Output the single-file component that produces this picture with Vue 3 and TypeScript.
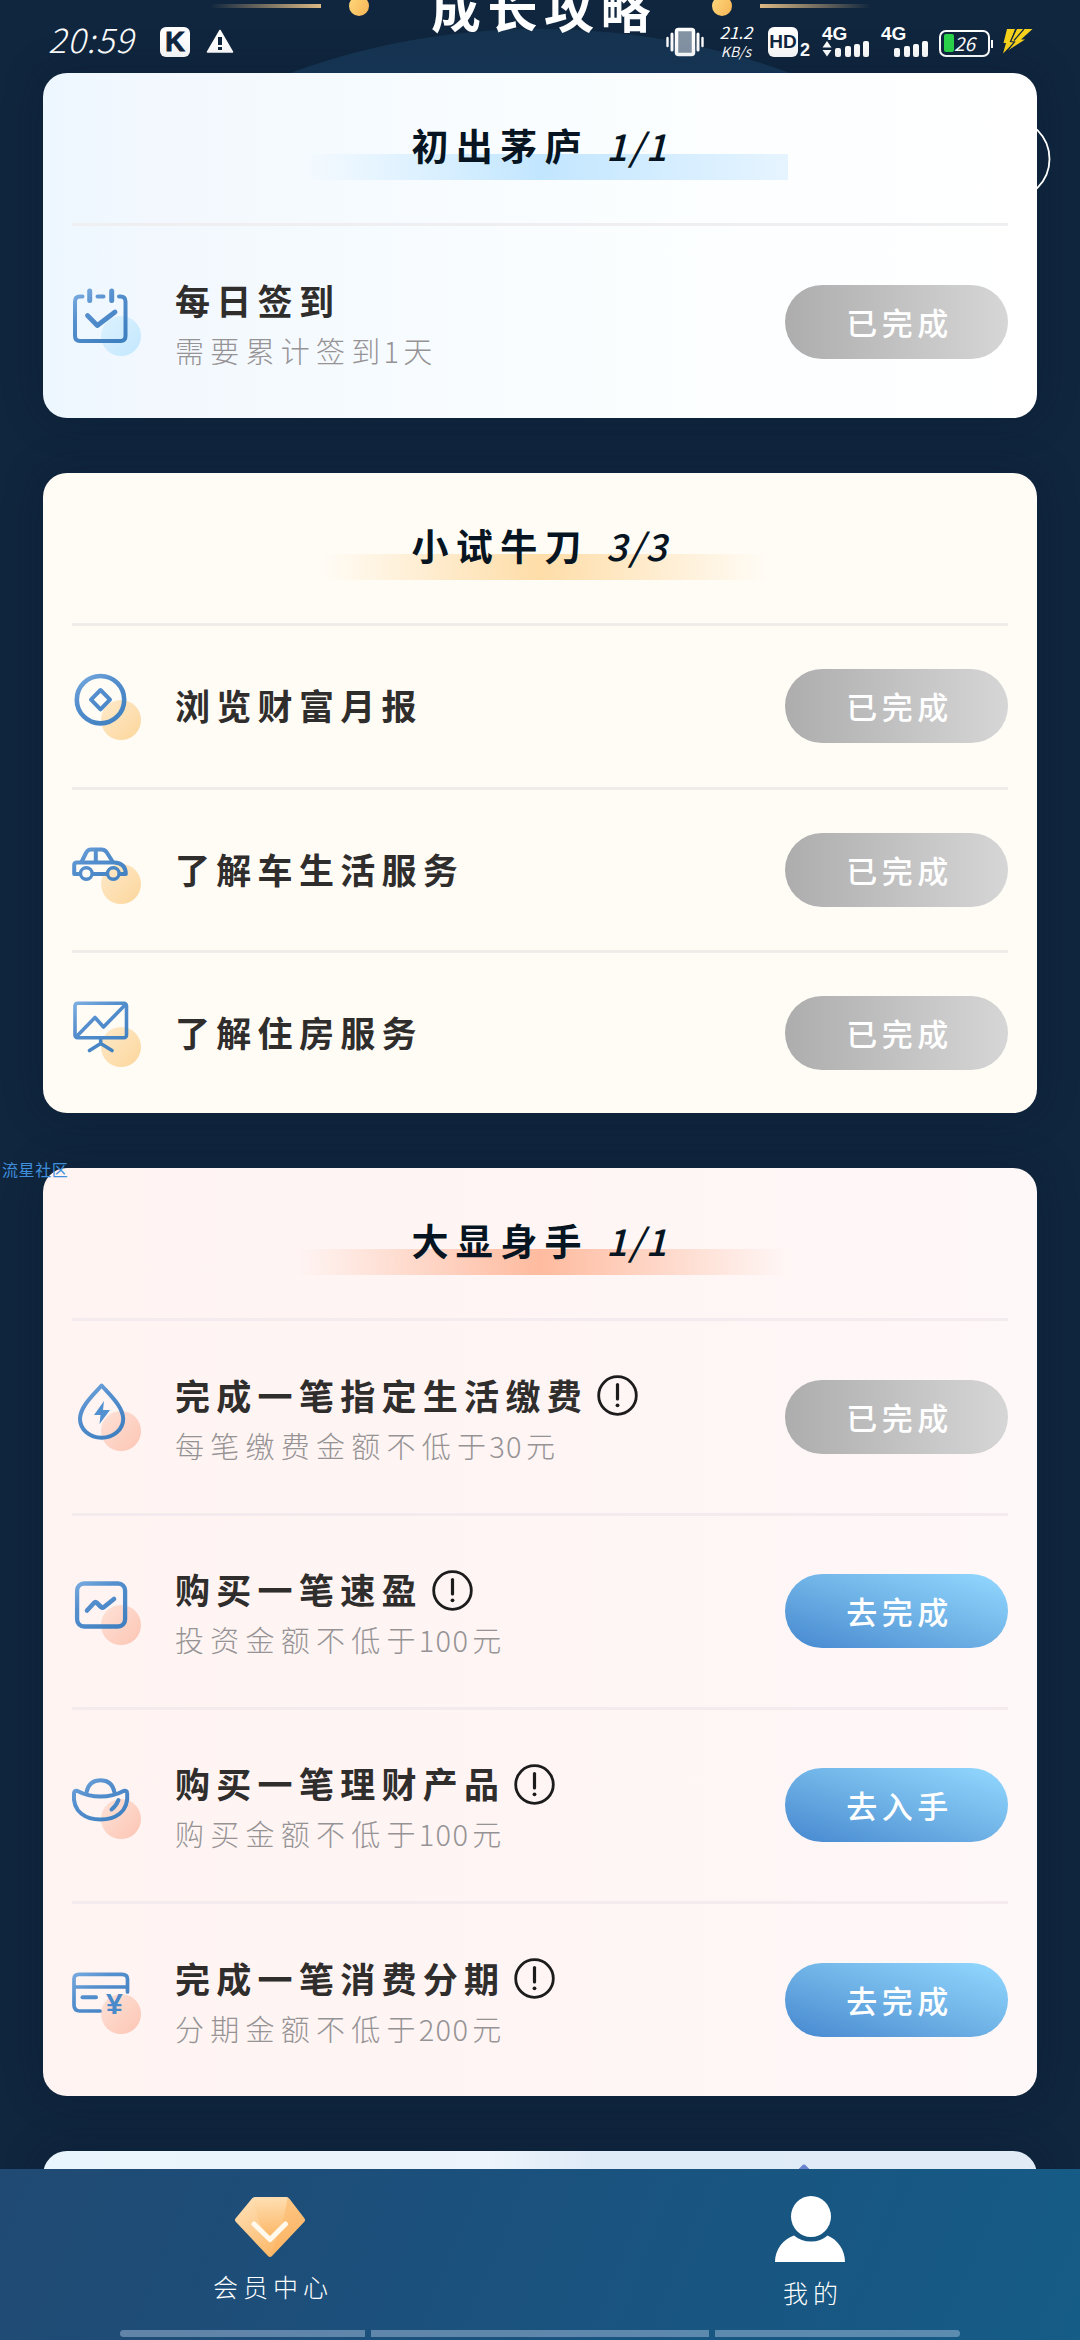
<script setup lang="ts">
type Tone = 'blue' | 'gold' | 'coral'
type IconName = 'calendar' | 'coin' | 'car' | 'board' | 'drop' | 'trend' | 'ingot' | 'bill'

interface Task {
  icon: IconName
  label: string
  desc?: string
  info?: boolean
  action: string
  done: boolean
}

interface Group {
  title: string
  count: string
  tone: Tone
  tasks: Task[]
}

const groups: Group[] = [
  {
    title: '初出茅庐',
    count: '1/1',
    tone: 'blue',
    tasks: [{ icon: 'calendar', label: '每日签到', desc: '需要累计签到1天', action: '已完成', done: true }],
  },
  {
    title: '小试牛刀',
    count: '3/3',
    tone: 'gold',
    tasks: [
      { icon: 'coin', label: '浏览财富月报', action: '已完成', done: true },
      { icon: 'car', label: '了解车生活服务', action: '已完成', done: true },
      { icon: 'board', label: '了解住房服务', action: '已完成', done: true },
    ],
  },
  {
    title: '大显身手',
    count: '1/1',
    tone: 'coral',
    tasks: [
      { icon: 'drop', label: '完成一笔指定生活缴费', desc: '每笔缴费金额不低于30元', info: true, action: '已完成', done: true },
      { icon: 'trend', label: '购买一笔速盈', desc: '投资金额不低于100元', info: true, action: '去完成', done: false },
      { icon: 'ingot', label: '购买一笔理财产品', desc: '购买金额不低于100元', info: true, action: '去入手', done: false },
      { icon: 'bill', label: '完成一笔消费分期', desc: '分期金额不低于200元', info: true, action: '去完成', done: false },
    ],
  },
]

// Digits are set tighter than the Chinese characters around them.
const runs = (text: string): string[] => text.split(/(\d+)/).filter(Boolean)
const isDigits = (text: string): boolean => /^\d+$/.test(text)

const signalBars: number[] = [9, 11, 13, 16]
</script>

<template>
  <div class="screen">
    <svg class="defs" width="0" height="0" aria-hidden="true">
      <defs>
        <linearGradient id="stroke-blue" gradientUnits="userSpaceOnUse" x1="2" y1="2" x2="40" y2="58">
          <stop offset="0" stop-color="#7fb0e2" />
          <stop offset="0.4" stop-color="#558fce" />
          <stop offset="1" stop-color="#3f80c0" />
        </linearGradient>
        <linearGradient id="dot-blue" x1="0" y1="0" x2="1" y2="1">
          <stop offset="0" stop-color="#ddf1fe" />
          <stop offset="1" stop-color="#c3e8fe" />
        </linearGradient>
        <linearGradient id="dot-gold" x1="0" y1="0" x2="1" y2="1">
          <stop offset="0" stop-color="#feeacb" />
          <stop offset="1" stop-color="#fcd69b" />
        </linearGradient>
        <linearGradient id="dot-coral" x1="0" y1="0" x2="1" y2="1">
          <stop offset="0" stop-color="#fee2d8" />
          <stop offset="1" stop-color="#fcc5b3" />
        </linearGradient>
      </defs>
    </svg>

    <header class="hero">
      <div class="hill"></div>
      <div class="hero-line">
        <i class="ray left"></i>
        <i class="bead"></i>
        <h1>成长攻略</h1>
        <i class="bead"></i>
        <i class="ray right"></i>
      </div>
    </header>

    <div class="status">
      <div class="status-side">
        <span class="clock">20:59</span>
        <span class="badge k">K</span>
        <svg class="warn" width="28" height="24" viewBox="0 0 28 24">
          <path d="M14 1.5 26.5 23H1.5Z" fill="#fff" stroke="#fff" stroke-width="1.5" stroke-linejoin="round" />
          <path d="M14 8v8M14 18v3" stroke="#10263e" stroke-width="4" />
        </svg>
      </div>
      <div class="status-side">
        <svg class="vib" width="38" height="30" viewBox="0 0 38 30">
          <rect x="10.5" y="2.500" width="17" height="25" rx="2" fill="#8494a5" stroke="#fff" stroke-width="3.500" />
          <path d="M6 7v16M32 7v16" stroke="#fff" stroke-width="3" stroke-linecap="round" />
          <path d="M1.500 11v8M36.500 11v8" stroke="#fff" stroke-width="2.400" stroke-linecap="round" />
        </svg>
        <span class="speed"><b>21.2</b><b>KB/s</b></span>
        <span class="badge hd">HD</span>
        <span class="slot">2</span>
        <div v-for="n in 2" :key="n" class="signal" :class="{ second: n === 2 }">
          <span class="net">4G</span>
          <div class="signal-row">
            <svg width="10" height="16" viewBox="0 0 10 16" :class="{ blank: n === 2 }">
              <path d="M5 0 9.500 6.500H.5ZM5 15.500 .5 9H9.500Z" fill="#fff" />
            </svg>
            <i v-for="h in signalBars" :key="h" :style="{ height: h + 'px' }"></i>
          </div>
        </div>
        <div class="battery"><i></i><span>26</span></div>
        <svg class="bolt" width="31" height="26" viewBox="0 0 31 26">
          <path d="M5 1H13L9 13H14L1 25.500 4 15H1.500Z" fill="#f7d21c" />
          <path d="M15 1H30.500L19 11.500H23L5 23 12 14.500H8.500Z" fill="#f7d21c" />
          <path d="M14 1 8.500 13.500 12.500 14 4 24M22 1 12 12.500" fill="none" stroke="#10263e" stroke-width="1.200" />
        </svg>
      </div>
    </div>

    <main class="cards">
      <section v-for="group in groups" :key="group.title" class="card" :class="group.tone">
        <div class="card-head">
          <h2><span>{{ group.title }}</span><em>{{ group.count }}</em></h2>
        </div>
        <div v-for="task in group.tasks" :key="task.label" class="task" :class="{ tall: task.desc }">
          <svg class="icon" width="70" height="70" viewBox="0 0 70 70">
            <circle cx="49" cy="49" r="20" :fill="`url(#dot-${group.tone})`" />
            <g fill="none" stroke="url(#stroke-blue)" stroke-width="4" stroke-linecap="round" stroke-linejoin="round">
              <g v-if="task.icon === 'calendar'">
                <path d="M10.500 9.500H8Q3 9.500 3 14.500V49Q3 54 8 54H48.500Q53.500 54 53.500 49V14.500Q53.500 9.500 48.500 9.500H47M25.500 9.500H31.500" />
                <path d="M17.700 4V13.500M39.700 4V13.500" stroke-width="5" />
                <path d="M15.500 28.500 25.300 38.500 43 25" stroke-width="4.800" />
              </g>
              <g v-else-if="task.icon === 'coin'" stroke-width="4.600">
                <circle cx="28.500" cy="28.700" r="23.700" />
                <path d="M28.500 19 38 28.700 28.500 38.400 19 28.700Z" stroke-width="4" />
              </g>
              <g v-else-if="task.icon === 'car'">
                <path d="M7.500 39H2.200V30Q2.200 27.500 5 27.500H42Q53.800 28 53.800 39H48.500M21.500 39H34" />
                <path d="M9.500 27 14 18Q15.500 14.500 19 14.500H29.500Q32.500 14.500 34.500 17L40.500 26.500M23.800 15V27" />
                <circle cx="14.300" cy="38.500" r="5.800" stroke-width="3.400" />
                <circle cx="41.300" cy="38.500" r="5.800" stroke-width="3.400" />
              </g>
              <g v-else-if="task.icon === 'board'" stroke-width="3.600">
                <rect x="3" y="5.300" width="51.500" height="34.500" rx="2.500" />
                <path d="M4.500 38.500 23 19.500 31.500 29 53.500 6.500M28.700 41V45.500M17.500 52.500 28.700 45.500 40 52.500" />
              </g>
              <g v-else-if="task.icon === 'drop'">
                <path d="M29.600 3.500C22 12 8 24.500 8 37A21.600 18.800 0 0 0 51.200 37C51.200 24.500 37 12 29.600 3.500Z" />
                <path d="M32 19 22 33H28.500L27.500 42 38 28H31Z" fill="#5290d0" stroke="none" />
              </g>
              <g v-else-if="task.icon === 'trend'">
                <rect x="5.100" y="7.500" width="48" height="43" rx="7" stroke-width="4.300" />
                <path d="M15 34.500 22 27Q23.500 25.500 25 27L29 31Q30.500 32.200 32 31L42 23" stroke-width="4.600" />
              </g>
              <g v-else-if="task.icon === 'ingot'">
                <path d="M2 23C0 43 15 49.500 28.500 49.500S57 43 55.200 23Q55 20 51.500 21C45 24.500 37 26.500 28.500 26.500S12 24.500 5.500 21Q2.300 20 2 23Z" />
                <path d="M14.500 22.500C16 14 21 10.200 28.500 10.200S41 14 42.500 22.500" />
                <path d="M46.500 30C45 34 43 36.800 39.500 39.500" />
              </g>
              <g v-else>
                <path d="M28 46H8Q2 46 2 40V14Q2 9.300 7 9.300H50Q55.500 9.300 55.500 14V27M2 22H55" stroke-width="3.700" />
                <path d="M10.500 32.300H24" />
                <text class="yen" x="42.300" y="49">¥</text>
              </g>
            </g>
          </svg>
          <div class="words">
            <div class="label">
              <span>{{ task.label }}</span>
              <svg v-if="task.info" width="41" height="41" viewBox="0 0 41 41">
                <circle cx="20.500" cy="20.500" r="18.800" fill="none" stroke="#1d1c1c" stroke-width="2.800" />
                <path d="M20.500 9.500V24" stroke="#1d1c1c" stroke-width="3.200" stroke-linecap="round" />
                <circle cx="20.500" cy="30.300" r="1.900" fill="#1d1c1c" />
              </svg>
            </div>
            <p v-if="task.desc"><span v-for="(run, i) in runs(task.desc)" :key="i" :class="{ digits: isDigits(run) }">{{ run }}</span></p>
          </div>
          <button :class="{ done: task.done }">{{ task.action }}</button>
        </div>
      </section>
      <section class="card next"><i></i></section>
    </main>

    <svg class="bubble" width="84" height="84" viewBox="0 0 84 84">
      <circle cx="42" cy="42" r="40.500" fill="none" stroke="#fff" stroke-width="1.800" />
    </svg>
    <span class="mark">流星社区</span>

    <nav class="tabs">
      <a class="tab">
        <svg width="72" height="62" viewBox="0 0 72 62">
          <defs>
            <linearGradient id="gem" x1="0" y1="0" x2="0.600" y2="1">
              <stop offset="0" stop-color="#fee3bd" />
              <stop offset="1" stop-color="#fdb765" />
            </linearGradient>
            <linearGradient id="gem-mid" x1="0" y1="0" x2="0" y2="1">
              <stop offset="0" stop-color="#fee0b5" />
              <stop offset="1" stop-color="#fdb05a" />
            </linearGradient>
          </defs>
          <path d="M21 1H52Q54 1 55.200 2.500L70.500 22.500Q71.500 24 70.500 25.500L38 60Q36 62 34 60L1.500 25.500Q.5 24 1.500 22.500L18 2.500Q19 1 21 1Z" fill="url(#gem)" />
          <path d="M54 1.500 48.500 26 36 60.500 70.800 25Q71.500 24 70.500 22.500L55 2.500Z" fill="#fcaf58" opacity="0.350" />
          <path d="M18.500 2 25 26 36 44 48.500 26 53.500 1Z" fill="url(#gem-mid)" opacity="0.800" />
          <path d="M20 28 36 43.500 51.500 28" fill="none" stroke="#fff9ee" stroke-width="5" stroke-linecap="round" stroke-linejoin="round" />
        </svg>
        <span>会员中心</span>
      </a>
      <a class="tab mine">
        <svg width="70" height="66" viewBox="0 0 70 66">
          <ellipse cx="36" cy="20.500" rx="20" ry="20.500" fill="#fff" />
          <path d="M0 66C0 54 8 43 19 39.500Q26 45.500 36 45.500T52.500 39.500C63 44 70 54 70 66Z" fill="#fff" />
        </svg>
        <span>我的</span>
      </a>
      <div class="gesture"><i></i><i></i><i></i></div>
    </nav>
  </div>
</template>

<style>
body {
  margin: 0;
  background: #10263e;
}
</style>

<style scoped>
.screen {
  position: relative;
  width: 1080px;
  height: 2340px;
  overflow: hidden;
  background: #10263e;
  font-family: "Noto Sans CJK SC", sans-serif;
}
.defs {
  position: absolute;
}
h1,
h2,
p {
  margin: 0;
}

.hero {
  position: relative;
  height: 73px;
  overflow: hidden;
}
.hill {
  position: absolute;
  left: -192px;
  top: 29px;
  width: 1464px;
  height: 1464px;
  border-radius: 50%;
  background: linear-gradient(#15334f, #18395a 50px);
}
.hero-line {
  position: relative;
  display: flex;
  align-items: center;
  justify-content: center;
  height: 12px;
  margin-left: 1px;
}
.hero-line h1 {
  width: 227px;
  margin: 0 54px 0 62px;
  font-size: 50px;
  font-weight: 700;
  line-height: 58px;
  letter-spacing: 6.500px;
  white-space: nowrap;
  color: #fff;
}
.bead {
  width: 20px;
  height: 20px;
  border-radius: 50%;
  background: linear-gradient(120deg, #ffd97c, #f5b455);
}
.ray {
  width: 111px;
  height: 4px;
}
.ray.left {
  margin-right: 28px;
  background: linear-gradient(90deg, transparent, #dcb884);
}
.ray.right {
  margin-left: 28px;
  background: linear-gradient(270deg, transparent, #dcb884);
}

.status {
  position: absolute;
  top: 20px;
  left: 48px;
  right: 48px;
  height: 42px;
  display: flex;
  justify-content: space-between;
  color: #fff;
}
.status-side {
  display: flex;
  align-items: center;
}
.clock {
  width: 112px;
  font-size: 34px;
  font-weight: 300;
  font-style: italic;
  line-height: 36px;
  margin-bottom: 4px;
  letter-spacing: 1px;
}
.badge {
  width: 30px;
  height: 30px;
  margin-top: 2px;
  border-radius: 6px;
  background: #fff;
  color: #10263e;
  font-family: "Liberation Sans", sans-serif;
  font-weight: 700;
  text-align: center;
}
.badge.k {
  font-size: 27px;
  line-height: 31px;
  -webkit-text-stroke: 1px #10263e;
}
.warn {
  margin-left: 16px;
}
.vib {
  margin-top: 2px;
}
.speed {
  display: flex;
  flex-direction: column;
  width: 40px;
  margin: 0 12px;
  align-items: center;
}
.speed b {
  font-size: 17px;
  font-weight: 400;
  font-style: italic;
  line-height: 20px;
}
.speed b + b {
  font-size: 14px;
  line-height: 18px;
}
.badge.hd {
  font-size: 19px;
  line-height: 30px;
}
.slot {
  width: 11px;
  margin: 17px 11px 0 2px;
  font: 700 18px/20px "Liberation Sans", sans-serif;
}
.signal {
  display: flex;
  flex-direction: column;
  width: 47px;
  margin-top: 2px;
}
.signal.second {
  margin-left: 12px;
}
.net {
  font: 700 19px/14px "Liberation Sans", sans-serif;
}
.signal-row {
  display: flex;
  align-items: flex-end;
  justify-content: space-between;
  height: 16px;
}
.signal-row i {
  width: 6px;
  border-radius: 2px;
  background: #fff;
}
.blank {
  visibility: hidden;
}
.battery {
  position: relative;
  box-sizing: border-box;
  display: flex;
  align-items: center;
  width: 51px;
  height: 27px;
  margin: 4px 12px 0 11px;
  padding-left: 3px;
  border: 2px solid #fff;
  border-radius: 7px;
}
.battery::after {
  content: "";
  position: absolute;
  right: -5px;
  top: 8px;
  width: 2px;
  height: 8px;
  background: #fff;
}
.battery i {
  width: 10px;
  height: 18px;
  border-radius: 2px;
  background: #2bd54a;
}
.battery span {
  font-size: 19px;
  font-weight: 400;
  font-style: italic;
  line-height: 20px;
}
.bolt {
  margin-right: -1px;
}

.cards {
  display: flex;
  flex-direction: column;
  gap: 55px;
  padding: 0 43px;
}
.card {
  position: relative;
  border-radius: 24px;
  box-shadow: 0 0 40px rgba(5, 22, 42, 0.300);
  padding: 0 29px;
}
.card.blue {
  height: 345px;
  background: linear-gradient(90deg, #edf7ff 0%, #f3f8fe 12%, #f6fbff 33%, #fbfeff 60%, #ffffff 100%);
  --glow: linear-gradient(90deg, transparent 2%, #c2e6ff 50%, #e6f4ff);
}
.card.gold {
  height: 640px;
  background: #fffcf6;
  --glow: linear-gradient(90deg, transparent 6%, #fedda8 50%, transparent 96%);
}
.card.coral {
  height: 928px;
  background: linear-gradient(90deg, #fff4f2, #fef5f4 50%, #fff8f8);
  --glow: linear-gradient(90deg, transparent 1%, #febb9f 50%, transparent);
}
.card-head {
  box-sizing: border-box;
  height: 153.400px;
  padding-top: 42px;
  border-bottom: 3px solid #efeef0;
}
.card.gold .card-head,
.card.gold .task {
  border-color: #efecea;
}
.card.coral .card-head,
.card.coral .task {
  border-color: #f3ebee;
}
.card-head h2 {
  display: flex;
  align-items: flex-start;
  justify-content: center;
  width: 496px;
  height: 65px;
  margin: 0 auto;
  background: var(--glow) 0 39px / 100% 26px no-repeat;
  color: #061521;
  font-size: 37px;
  line-height: 60px;
  font-weight: 700;
}
.card-head span {
  letter-spacing: 7.400px;
}
.card-head em {
  margin-left: 17px;
  font-weight: 500;
  letter-spacing: 2px;
}

.task {
  box-sizing: border-box;
  display: flex;
  align-items: center;
  height: 163.200px;
  border-bottom: 3px solid #efeef0;
}
.task.tall {
  height: 194.200px;
}
.task:last-child {
  border-bottom: 0;
  height: 160.300px;
}
.task.tall:last-child {
  height: 191.300px;
}
.icon {
  flex: none;
  overflow: visible;
}
.yen {
  font: 700 30px "Liberation Sans", sans-serif;
  fill: #4a8acb;
  stroke: none;
  text-anchor: middle;
}
.words {
  flex: 1;
  margin-left: 33px;
}
.label {
  display: flex;
  align-items: center;
  height: 60px;
  color: #302d2d;
  font-size: 35px;
  font-weight: 700;
  line-height: 57px;
  letter-spacing: 6.300px;
}
.label span {
  height: 60px;
}
.label svg {
  margin-left: 9px;
}
.words p {
  height: 42px;
  color: #969395;
  font-size: 29px;
  font-weight: 300;
  line-height: 39px;
  letter-spacing: 6.250px;
  white-space: nowrap;
}
.words p .digits {
  margin-left: -3px;
  margin-right: 3px;
  letter-spacing: 1.300px;
}
button {
  width: 223px;
  height: 74px;
  padding: 0;
  border: 0;
  border-radius: 37px;
  background: linear-gradient(18deg, #4a8cd2 5%, #6fb2e6 50%, #8dd3fc 92%);
  color: #fff;
  font-family: inherit;
  font-size: 31px;
  font-weight: 500;
  line-height: 72px;
  letter-spacing: 4.500px;
  text-indent: 6px;
}
button.done {
  background: linear-gradient(90deg, #adadad, #d6d6d6);
}
.card.next {
  height: 200px;
  background: linear-gradient(90deg, #e9f5fc, #edf4fb 45%, #dfebf7 55%, #e0ebf6);
}
.card.next i {
  position: absolute;
  left: 755px;
  top: 15px;
  width: 12px;
  height: 12px;
  border-radius: 3px;
  background: #6b83cf;
  transform: rotate(45deg);
}

.bubble {
  position: absolute;
  left: 967px;
  top: 117px;
}
.mark {
  position: absolute;
  left: 2px;
  top: 1157px;
  color: #3f8fdd;
  font-size: 16px;
  line-height: 24px;
  letter-spacing: 0.600px;
}

.tabs {
  position: absolute;
  left: 0;
  right: 0;
  bottom: 0;
  height: 171px;
  display: flex;
  background: linear-gradient(112deg, #204a73, #1b517d 45%, #155c87);
}
.tab {
  flex: 1;
  display: flex;
  flex-direction: column;
  align-items: center;
  padding-top: 27px;
  color: #fff;
}
.tab span {
  margin-top: 10px;
  font-size: 25px;
  font-weight: 300;
  line-height: 36px;
  letter-spacing: 5px;
  text-indent: 6px;
}
.tab.mine span {
  margin-top: 12px;
}
.gesture {
  position: absolute;
  left: 120px;
  right: 120px;
  bottom: 3px;
  display: flex;
  gap: 6px;
}
.gesture i {
  flex: 245;
  height: 7px;
  background: rgba(190, 210, 235, 0.420);
}
.gesture i:nth-child(2) {
  flex: 338;
}
.gesture i:first-child {
  border-radius: 4px 0 0 4px;
}
.gesture i:last-child {
  border-radius: 0 4px 4px 0;
}
</style>
